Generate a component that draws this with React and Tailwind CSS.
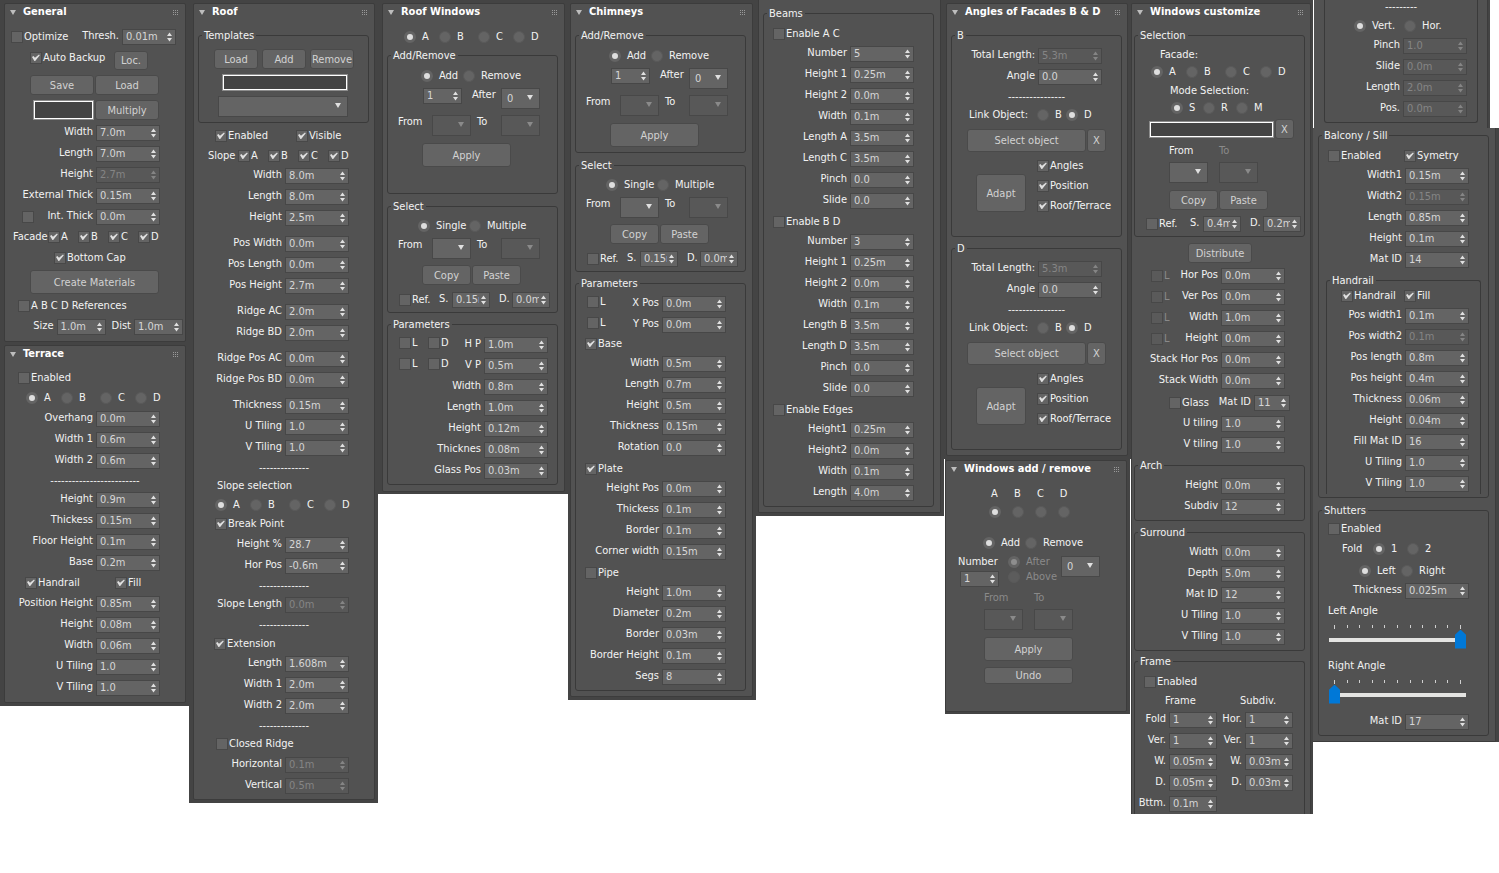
import React, { useId } from 'react'

const Header = ({ title }) => (
  <div className="flex h-4 items-center pl-[5px] pr-[7px]">
    <svg className="mr-[7px] h-[5px] w-[6px]" viewBox="0 0 6 5">
      <path d="M0 0H6L3 5Z" fill="#bdbdbd" />
    </svg>
    <h2 className="whitespace-nowrap text-[11px] font-bold leading-4 text-white">{title}</h2>
    <svg className="ml-auto h-[5px] w-[5px] shrink-0" viewBox="0 0 5 5" fill="#9a9a9a" shapeRendering="crispEdges">
      {[0, 2, 4].map((y) =>
        [0, 2, 4].map((x) => <rect key={x + '-' + y} x={x} y={y} width="1" height="1" />)
      )}
    </svg>
  </div>
)

const Panel = ({ title, className = '', children }) => (
  <section className={`rounded-[2px] border border-[#3c3c3c] bg-[#525252] ${className}`}>
    <Header title={title} />
    {children}
  </section>
)

const Group = ({ title, className = '', children }) => (
  <fieldset className={`min-w-0 rounded-[3px] border border-[#3a3a3a] ${className}`}>
    <legend className="ml-[3px] h-3 px-[2px] leading-[13px]">{title}</legend>
    {children}
  </fieldset>
)

const Check = ({ label, checked, disabled, className = '' }) => (
  <label className={`flex h-3 items-center whitespace-nowrap ${disabled ? 'text-[#8a8a8a]' : ''} ${className}`}>
    <span className="relative mr-px size-3 shrink-0">
      <input
        type="checkbox"
        defaultChecked={checked}
        disabled={disabled}
        aria-label={label || 'Internal thickness'}
        className="peer block size-3 appearance-none border border-[#484848] bg-[#646464] disabled:bg-[#5a5a5a]"
      />
      <svg
        className="pointer-events-none absolute inset-0 hidden size-3 peer-checked:block"
        viewBox="0 0 12 12"
        fill="#e0e0e0"
      >
        <path d="M2 5L3.4 4L5 5.8L9 2.4L9.8 3.2L5.2 9L4.4 9Z" />
      </svg>
    </span>
    {label}
  </label>
)

// options: [label, width class]
const Radios = ({ options, value, className = '', vertical, disabled, stacked }) => {
  const name = useId()
  return (
    <div className={`flex ${vertical ? 'flex-col gap-[3px]' : ''} ${className}`}>
      {options.map(([label, width = '']) => (
        <label
          key={label}
          className={`flex items-center whitespace-nowrap ${stacked ? 'flex-col-reverse gap-[6px] leading-3' : 'h-3 gap-[6px]'} ${disabled ? 'text-[#8a8a8a]' : ''} ${width}`}
        >
          <input
            type="radio"
            name={name}
            defaultChecked={label === value}
            disabled={disabled}
            className="size-3 shrink-0 appearance-none rounded-full border border-[#5a5a5a] bg-[#646464] checked:border-[3px] checked:border-[#646464] checked:bg-[#dedede] disabled:bg-[#5c5c5c] disabled:checked:bg-[#8e8e8e]"
          />
          <span>{label}</span>
        </label>
      ))}
    </div>
  )
}

const ABCD = [['A', 'w-[35px]'], ['B', 'w-[39px]'], ['C', 'w-[35px]'], ['D']]
const ADD_REMOVE = [['Add', 'w-[42px]'], ['Remove']]

const Spinner = ({ id, value, disabled, label, width = 'w-16' }) => (
  <span
    className={`flex h-4 shrink-0 items-center border border-[#474747] pl-[3px] pr-[3px] ${disabled ? 'bg-[#585858] text-[#858585]' : 'bg-[#646464] text-[#d6d6d6]'} ${width}`}
  >
    <input
      id={id}
      type="text"
      defaultValue={value}
      disabled={disabled}
      aria-label={label}
      className="h-[14px] w-0 min-w-0 grow bg-transparent leading-[14px] outline-none"
    />
    <svg className="ml-[2px] h-[10px] w-[5px] shrink-0" viewBox="0 0 5 10" fill={disabled ? '#858585' : '#e0e0e0'}>
      <path d="M0 4L2.5 0.5L5 4ZM0 6L2.5 9.5L5 6Z" />
    </svg>
  </span>
)

const Field = ({ label, value, disabled, width, labelWidth = 'pr-[3px]', className = '' }) => {
  const id = useId()
  return (
    <div className={`flex h-4 justify-end ${className}`}>
      <label htmlFor={id} className={`whitespace-nowrap leading-[14px] ${labelWidth}`}>
        {label}
      </label>
      <Spinner id={id} value={value} disabled={disabled} width={width} />
    </div>
  )
}

// rows: [label, value, disabled]
const Fields = ({ rows, className = '' }) => (
  <div className={`flex flex-col gap-[5px] ${className}`}>
    {rows.map(([label, value, disabled]) => (
      <Field key={label} label={label} value={value} disabled={disabled} />
    ))}
  </div>
)

const Button = ({ children, className = '' }) => (
  <button
    type="button"
    className={`shrink-0 rounded-[3px] border border-[#4a4a4a] bg-[#646464] text-center leading-none text-[#d2d2d2] hover:bg-[#6e6e6e] ${className}`}
  >
    {children}
  </button>
)

const Select = ({ label, value = '', disabled, width = 'w-[39px]' }) => (
  <span className={`relative h-[21px] shrink-0 ${width}`}>
    <select
      aria-label={label}
      disabled={disabled}
      className="block h-full w-full appearance-none border border-[#484848] bg-[#646464] pl-[5px] text-[#d6d6d6] disabled:bg-[#585858] disabled:opacity-100"
    >
      <option>{value}</option>
    </select>
    <svg className="pointer-events-none absolute right-[7px] top-[7px] h-[5px] w-[6px]" viewBox="0 0 6 5">
      <path d="M0 0H6L3 5Z" fill={disabled ? '#8a8a8a' : '#e0e0e0'} />
    </svg>
  </span>
)

const ColorBox = ({ label, className = '' }) => (
  <input
    type="text"
    aria-label={label}
    className={`block border border-[#8c8c8c] bg-[#444444] px-1 text-white shadow-[inset_0_0_0_1px_#ffffff] outline-none ${className}`}
  />
)

const Dashes = ({ children }) => (
  <div className="mt-[6px] h-3 overflow-hidden whitespace-nowrap text-center leading-3">{children}</div>
)

const FromTo = ({ enabled }) => (
  <div className="mt-[6px] flex h-[21px] pl-[10px] leading-[14px]">
    <span className="w-[34px]">From</span>
    <Select label="From" disabled={!enabled} />
    <span className="ml-[6px] w-6">To</span>
    <Select label="To" disabled />
  </div>
)

const AddRemove = ({ className }) => (
  <Group title="Add/Remove" className={className}>
    <Radios options={ADD_REMOVE} value="Add" className="mt-[9px] pl-[33px]" />
    <div className="mt-[6px] flex h-[21px] pl-[35px] leading-[14px]">
      <Spinner label="Count" value="1" width="w-[39px]" />
      <span className="ml-[10px] w-[29px]">After</span>
      <Select label="After" value="0" />
    </div>
    <FromTo />
    <Button className="ml-[34px] mt-[7px] block h-6 w-[89px]">Apply</Button>
  </Group>
)

const CopyPaste = ({ className = '' }) => (
  <div className={`flex gap-px pl-[34px] ${className}`}>
    <Button className="h-5 w-[49px]">Copy</Button>
    <Button className="h-5 w-[49px]">Paste</Button>
  </div>
)

const RefRow = ({ s, d, className = '', refWidth = 'w-[40px]' }) => (
  <div className={`flex items-center pl-[11px] ${className}`}>
    <Check label="Ref." className={refWidth} />
    <Field label="S." value={s} width="w-[38px]" labelWidth="w-[13px]" />
    <Field label="D." value={d} width="w-[38px]" labelWidth="w-[13px]" className="ml-[9px]" />
  </div>
)

const SelectGroup = ({ className }) => (
  <Group title="Select" className={`pb-1 ${className}`}>
    <Radios options={[['Single', 'w-[51px]'], ['Multiple']]} value="Single" className="mt-2 pl-[30px]" />
    <FromTo enabled />
    <CopyPaste className="mt-[6px]" />
    <RefRow s="0.15m" d="0.0m" className="mt-[7px]" />
  </Group>
)

const General = () => (
  <Panel title="General" className="pb-[6px]">
    <div className="mt-[9px] flex items-center justify-between pl-[6px] pr-[9px]">
      <Check label="Optimize" />
      <Field label="Thresh." value="0.01m" width="w-[54px]" />
    </div>
    <div className="mt-[6px] flex items-start pl-[25px] pr-[37px]">
      <Check label="Auto Backup" checked className="pt-px" />
      <Button className="ml-auto h-[19px] w-[34px]">Loc.</Button>
    </div>
    <div className="mt-[5px] flex gap-px pl-[25px]">
      <Button className="h-5 w-16">Save</Button>
      <Button className="h-5 w-16">Load</Button>
    </div>
    <div className="mt-[5px] flex gap-px pl-[28px]">
      <ColorBox label="Multiply value" className="h-5 w-[61px]" />
      <Button className="h-5 w-16">Multiply</Button>
    </div>
    <Fields
      className="mt-[5px] pr-[25px]"
      rows={[
        ['Width', '7.0m'],
        ['Length', '7.0m'],
        ['Height', '2.7m', true],
        ['External Thick', '0.15m'],
      ]}
    />
    <div className="mt-[5px] flex items-center justify-between pl-[17px] pr-[25px]">
      <Check />
      <Field label="Int. Thick" value="0.0m" />
    </div>
    <div className="mt-[6px] flex h-3 items-center pl-2">
      <span className="w-[35px]">Facade</span>
      {['A', 'B', 'C', 'D'].map((side) => (
        <Check key={side} label={side} checked className="w-[30px]" />
      ))}
    </div>
    <Check label="Bottom Cap" checked className="mt-[9px] pl-[49px]" />
    <Button className="ml-[25px] mt-[6px] block h-6 w-[129px]">Create Materials</Button>
    <Check label="A B C D References" className="mt-[6px] pl-[13px]" />
    <div className="mt-[7px] flex justify-end gap-[6px] pr-[2px]">
      <Field label="Size" value="1.0m" width="w-[49px]" />
      <Field label="Dist" value="1.0m" width="w-[49px]" />
    </div>
  </Panel>
)

const Terrace = () => (
  <Panel title="Terrace" className="mt-[3px] pb-[6px]">
    <Check label="Enabled" className="mt-[10px] pl-[13px]" />
    <Radios options={ABCD} value="A" className="mt-2 pl-[21px]" />
    <Fields
      className="mt-[7px] pr-[25px]"
      rows={[
        ['Overhang', '0.0m'],
        ['Width 1', '0.6m'],
        ['Width 2', '0.6m'],
      ]}
    />
    <Dashes>-------------------------</Dashes>
    <Fields
      className="mt-[5px] pr-[25px]"
      rows={[
        ['Height', '0.9m'],
        ['Thickess', '0.15m'],
        ['Floor Height', '0.1m'],
        ['Base', '0.2m'],
      ]}
    />
    <div className="mt-[6px] flex pl-5">
      <Check label="Handrail" checked className="w-[90px]" />
      <Check label="Fill" checked />
    </div>
    <Fields
      className="mt-[7px] pr-[25px]"
      rows={[
        ['Position Height', '0.85m'],
        ['Height', '0.08m'],
        ['Width', '0.06m'],
        ['U Tiling', '1.0'],
        ['V Tiling', '1.0'],
      ]}
    />
  </Panel>
)

const Roof = () => (
  <Panel title="Roof" className="pb-[5px]">
    <Group title="Templates" className="ml-1 mr-[5px] mt-[9px] pb-[5px]">
      <div className="mt-2 flex gap-1 pl-[15px]">
        <Button className="h-5 w-11">Load</Button>
        <Button className="h-5 w-11">Add</Button>
        <Button className="h-5 w-11">Remove</Button>
      </div>
      <ColorBox label="Template name" className="ml-[23px] mt-[5px] h-[17px] w-[126px]" />
      <div className="mt-[5px] flex pl-[19px]">
        <Select label="Template" width="w-[130px]" />
      </div>
    </Group>
    <div className="mt-[7px] flex pl-[21px]">
      <Check label="Enabled" checked className="w-[81px]" />
      <Check label="Visible" checked />
    </div>
    <div className="mt-2 flex h-3 items-center pl-[14px]">
      <span className="w-[30px]">Slope</span>
      {['A', 'B', 'C', 'D'].map((side) => (
        <Check key={side} label={side} checked className="w-[30px]" />
      ))}
    </div>
    <Fields
      className="mt-[6px] pr-[25px]"
      rows={[
        ['Width', '8.0m'],
        ['Length', '8.0m'],
        ['Height', '2.5m'],
      ]}
    />
    <Fields
      className="mt-[10px] pr-[25px]"
      rows={[
        ['Pos Width', '0.0m'],
        ['Pos Length', '0.0m'],
        ['Pos Height', '2.7m'],
      ]}
    />
    <Fields
      className="mt-[10px] pr-[25px]"
      rows={[
        ['Ridge AC', '2.0m'],
        ['Ridge BD', '2.0m'],
      ]}
    />
    <Fields
      className="mt-[10px] pr-[25px]"
      rows={[
        ['Ridge Pos AC', '0.0m'],
        ['Ridge Pos BD', '0.0m'],
      ]}
    />
    <Fields
      className="mt-[10px] pr-[25px]"
      rows={[
        ['Thickness', '0.15m'],
        ['U Tiling', '1.0'],
        ['V Tiling', '1.0'],
      ]}
    />
    <Dashes>--------------</Dashes>
    <p className="mt-[6px] h-3 pl-[23px] leading-3">Slope selection</p>
    <Radios options={ABCD} value="A" className="mt-[7px] pl-[21px]" />
    <Check label="Break Point" checked className="mt-[7px] pl-[21px]" />
    <Fields
      className="mt-[7px] pr-[25px]"
      rows={[
        ['Height %', '28.7'],
        ['Hor Pos', '-0.6m'],
      ]}
    />
    <Dashes>--------------</Dashes>
    <Fields className="mt-[5px] pr-[25px]" rows={[['Slope Length', '0.0m', true]]} />
    <Dashes>--------------</Dashes>
    <Check label="Extension" checked className="mt-[7px] pl-5" />
    <Fields
      className="mt-[6px] pr-[25px]"
      rows={[
        ['Length', '1.608m'],
        ['Width 1', '2.0m'],
        ['Width 2', '2.0m'],
      ]}
    />
    <Dashes>--------------</Dashes>
    <Check label="Closed Ridge" className="mt-[6px] pl-[22px]" />
    <Fields
      className="mt-[7px] pr-[25px]"
      rows={[
        ['Horizontal', '0.1m', true],
        ['Vertical', '0.5m', true],
      ]}
    />
  </Panel>
)

const RoofWindows = () => (
  <Panel title="Roof Windows" className="pb-[6px]">
    <Radios options={ABCD} value="A" className="mt-[11px] pl-[21px]" />
    <AddRemove className="ml-1 mr-[6px] mt-[6px] pb-[26px]" />
    <SelectGroup className="ml-1 mr-[6px] mt-[6px]" />
    <Group title="Parameters" className="ml-1 mr-[6px] mt-[5px] pb-[5px]">
      <div className="mt-[7px] flex flex-col gap-[5px] pl-[11px] pr-[9px]">
        {[
          ['H P', '1.0m'],
          ['V P', '0.5m'],
        ].map(([label, value]) => (
          <div key={label} className="flex">
            <Check label="L" className="w-[29px]" />
            <Check label="D" />
            <Field label={label} value={value} className="ml-auto" />
          </div>
        ))}
      </div>
      <Fields
        className="mt-[5px] pr-[9px]"
        rows={[
          ['Width', '0.8m'],
          ['Length', '1.0m'],
          ['Height', '0.12m'],
          ['Thicknes', '0.08m'],
          ['Glass Pos', '0.03m'],
        ]}
      />
    </Group>
  </Panel>
)

const Chimneys = () => (
  <Panel title="Chimneys" className="pb-[5px]">
    <AddRemove className="ml-1 mr-[6px] mt-[9px] pb-[5px]" />
    <SelectGroup className="ml-1 mr-[6px] mt-[6px]" />
    <Group title="Parameters" className="ml-1 mr-[6px] mt-[5px] pb-[5px]">
      <div className="mt-[7px] flex flex-col gap-[5px] pl-[11px] pr-[19px]">
        {['X Pos', 'Y Pos'].map((label) => (
          <div key={label} className="flex justify-between">
            <Check label="L" />
            <Field label={label} value="0.0m" />
          </div>
        ))}
      </div>
      <Check label="Base" checked className="mt-[5px] pl-[9px]" />
      <Fields
        className="mt-[6px] pr-[19px]"
        rows={[
          ['Width', '0.5m'],
          ['Length', '0.7m'],
          ['Height', '0.5m'],
          ['Thickness', '0.15m'],
          ['Rotation', '0.0'],
        ]}
      />
      <Check label="Plate" checked className="mt-[7px] pl-[9px]" />
      <Fields
        className="mt-[6px] pr-[19px]"
        rows={[
          ['Height Pos', '0.0m'],
          ['Thickess', '0.1m'],
          ['Border', '0.1m'],
          ['Corner width', '0.15m'],
        ]}
      />
      <Check label="Pipe" className="mt-[7px] pl-[9px]" />
      <Fields
        className="mt-[6px] pr-[19px]"
        rows={[
          ['Height', '1.0m'],
          ['Diameter', '0.2m'],
          ['Border', '0.03m'],
          ['Border Height', '0.1m'],
          ['Segs', '8'],
        ]}
      />
    </Group>
  </Panel>
)

const Beams = () => (
  <section className="rounded-b-[2px] border border-t-0 border-[#3c3c3c] bg-[#525252] pb-[5px] pt-[7px]">
    <Group title="Beams" className="ml-1 mr-[6px] pb-[5px]">
      <Check label="Enable A C" className="mt-[9px] pl-[9px]" />
      <Fields
        className="mt-[6px] pr-[19px]"
        rows={[
          ['Number', '5'],
          ['Height 1', '0.25m'],
          ['Height 2', '0.0m'],
          ['Width', '0.1m'],
          ['Length A', '3.5m'],
          ['Length C', '3.5m'],
          ['Pinch', '0.0'],
          ['Slide', '0.0'],
        ]}
      />
      <Check label="Enable B D" className="mt-[7px] pl-[9px]" />
      <Fields
        className="mt-[6px] pr-[19px]"
        rows={[
          ['Number', '3'],
          ['Height 1', '0.25m'],
          ['Height 2', '0.0m'],
          ['Width', '0.1m'],
          ['Length B', '3.5m'],
          ['Length D', '3.5m'],
          ['Pinch', '0.0'],
          ['Slide', '0.0'],
        ]}
      />
      <Check label="Enable Edges" className="mt-[7px] pl-[9px]" />
      <Fields
        className="mt-[6px] pr-[19px]"
        rows={[
          ['Height1', '0.25m'],
          ['Height2', '0.0m'],
          ['Width', '0.1m'],
          ['Length', '4.0m'],
        ]}
      />
    </Group>
  </section>
)

const FacadeAngle = ({ title, className }) => (
  <Group title={title} className={`ml-1 mr-[5px] pb-6 ${className}`}>
    <Fields
      className="mt-[7px] pr-[19px]"
      rows={[
        ['Total Length:', '5.3m', true],
        ['Angle', '0.0'],
      ]}
    />
    <Dashes>----------------</Dashes>
    <div className="mt-[6px] flex h-3 items-center pl-[17px]">
      <span className="w-[68px] whitespace-nowrap">Link Object:</span>
      <Radios options={[['B', 'w-[29px]'], ['D']]} value="D" />
    </div>
    <div className="mt-2 flex gap-px pl-[15px]">
      <Button className="h-[23px] w-[119px]">Select object</Button>
      <Button className="h-[23px] w-[19px]">X</Button>
    </div>
    <div className="mt-2 flex items-start pl-[24px]">
      <Button className="mt-[14px] h-[38px] w-[50px]">Adapt</Button>
      <div className="ml-[11px] flex flex-col gap-2">
        <Check label="Angles" checked />
        <Check label="Position" checked />
        <Check label="Roof/Terrace" checked />
      </div>
    </div>
  </Group>
)

const WindowsAddRemove = () => (
  <Panel title="Windows add / remove" className="pb-[27px]">
    <Radios
      stacked
      options={['A', 'B', 'C', 'D'].map((side) => [side, 'w-[23px]'])}
      value="A"
      className="mt-[11px] pl-[37px]"
    />
    <Radios options={ADD_REMOVE} value="Add" className="mt-[19px] pl-[37px]" />
    <div className="mt-[7px] flex items-start pl-3">
      <div className="w-[50px]">
        <div className="h-3 leading-3">Number</div>
        <div className="mt-[3px] flex pl-[2px]">
          <Spinner label="Number" value="1" width="w-[39px]" />
        </div>
      </div>
      <Radios vertical disabled options={[['After'], ['Above']]} value="After" className="w-[53px]" />
      <Select label="Position" value="0" />
    </div>
    <div className="mt-[5px] flex h-3 pl-[38px] leading-3 text-[#8a8a8a]">
      <span className="w-[50px]">From</span>
      <span>To</span>
    </div>
    <div className="mt-[5px] flex gap-[11px] pl-[38px]">
      <Select label="From" disabled />
      <Select label="To" disabled />
    </div>
    <div className="mt-[7px] flex flex-col gap-[6px] pl-[38px]">
      <Button className="h-6 w-[89px]">Apply</Button>
      <Button className="h-[17px] w-[89px]">Undo</Button>
    </div>
  </Panel>
)

const WindowsCustomize = () => (
  <Panel title="Windows customize" className="rounded-b-none border-b-0">
    <Group title="Selection" className="ml-[2px] mr-[5px] mt-[9px] pb-1">
      <p className="mt-2 h-3 pl-[25px] leading-3">Facade:</p>
      <Radios options={ABCD} value="A" className="mt-[5px] pl-4" />
      <p className="mt-[7px] h-3 pl-[35px] leading-3">Mode Selection:</p>
      <Radios
        options={[['S', 'w-8'], ['R', 'w-[33px]'], ['M']]}
        value="S"
        className="mt-[5px] pl-9"
      />
      <div className="mt-[5px] flex items-center gap-px pl-[14px]">
        <ColorBox label="Selected windows" className="h-[17px] w-[125px]" />
        <Button className="h-5 w-[19px]">X</Button>
      </div>
      <div className="mt-[6px] flex h-3 pl-[34px] leading-3">
        <span className="w-[50px]">From</span>
        <span className="text-[#8a8a8a]">To</span>
      </div>
      <div className="mt-[5px] flex gap-[11px] pl-[34px]">
        <Select label="From" />
        <Select label="To" disabled />
      </div>
      <CopyPaste className="mt-[7px]" />
      <RefRow s="0.4m" d="0.2m" refWidth="w-[44px]" className="mt-[6px]" />
    </Group>
    <Button className="ml-[56px] mt-[6px] block h-5 w-16">Distribute</Button>
    <div className="mt-[5px] flex flex-col gap-[5px] pl-[19px] pr-[25px]">
      {[
        ['Hor Pos', '0.0m'],
        ['Ver Pos', '0.0m'],
        ['Width', '1.0m'],
        ['Height', '0.0m'],
      ].map(([label, value]) => (
        <div key={label} className="flex items-center justify-between">
          <Check label="L" disabled />
          <Field label={label} value={value} />
        </div>
      ))}
    </div>
    <Fields
      className="mt-[5px] pr-[25px]"
      rows={[
        ['Stack Hor Pos', '0.0m'],
        ['Stack Width', '0.0m'],
      ]}
    />
    <div className="mt-[6px] flex items-center justify-end gap-[10px] pr-5">
      <Check label="Glass" />
      <Field label="Mat ID" value="11" width="w-[36px]" />
    </div>
    <Fields
      className="mt-[5px] pr-[25px]"
      rows={[
        ['U tiling', '1.0'],
        ['V tiling', '1.0'],
      ]}
    />
    <Group title="Arch" className="ml-[2px] mr-[5px] mt-[6px] pb-[5px]">
      <Fields
        className="mt-[7px] pr-[19px]"
        rows={[
          ['Height', '0.0m'],
          ['Subdiv', '12'],
        ]}
      />
    </Group>
    <Group title="Surround" className="ml-[2px] mr-[5px] mt-[5px] pb-[5px]">
      <Fields
        className="mt-[7px] pr-[19px]"
        rows={[
          ['Width', '0.0m'],
          ['Depth', '5.0m'],
          ['Mat ID', '12'],
          ['U Tiling', '1.0'],
          ['V Tiling', '1.0'],
        ]}
      />
    </Group>
    <Group title="Frame" className="ml-[2px] mr-[5px] mt-1 rounded-b-none border-b-0 pb-[2px]">
      <Check label="Enabled" className="mt-[9px] pl-[9px]" />
      <div className="mt-[7px] flex h-3 pl-[30px] leading-3">
        <span className="w-[75px]">Frame</span>
        <span>Subdiv.</span>
      </div>
      <div className="mt-[5px] flex flex-col gap-[5px]">
        {[
          ['Fold', '1', 'Hor.', '1'],
          ['Ver.', '1', 'Ver.', '1'],
          ['W.', '0.05m', 'W.', '0.03m'],
          ['D.', '0.05m', 'D.', '0.03m'],
          ['Bttm.', '0.1m'],
        ].map(([label, value, subLabel, subValue]) => (
          <div key={label} className="flex">
            <Field label={label} value={value} width="w-12" className="w-[82px]" />
            {subLabel && <Field label={subLabel} value={subValue} width="w-12" className="w-[76px]" />}
          </div>
        ))}
      </div>
    </Group>
  </Panel>
)

const ArchLimits = () => (
  <div className="mr-[9px] border-l border-white bg-[#444444] pr-[2px]">
    <section className="border-r border-[#3c3c3c] bg-[#525252] pb-[5px]">
      <div className="ml-[10px] mr-[9px] rounded-b-[3px] border border-t-0 border-[#3a3a3a] pb-[5px] pt-px">
        <div className="h-3 text-center leading-3">---------</div>
        <Radios options={[['Vert.', 'w-[50px]'], ['Hor.']]} value="Vert." className="mt-[7px] pl-[29px]" />
        <Fields
          className="mt-[6px] pr-[10px]"
          rows={[
            ['Pinch', '1.0', true],
            ['Slide', '0.0m', true],
            ['Length', '2.0m', true],
            ['Pos.', '0.0m', true],
          ]}
        />
      </div>
    </section>
  </div>
)

const Angle = ({ label, value, className }) => {
  const id = useId()
  return (
    <div className={`pl-[9px] ${className}`}>
      <label htmlFor={id} className="block h-3 leading-3">
        {label}
      </label>
      <svg className="mt-2 h-1 w-[138px]" viewBox="0 0 138 4" fill="#d0d0d0" shapeRendering="crispEdges">
        {[6, 19, 31, 44, 56, 69, 82, 94, 107, 119, 132].map((x) => (
          <rect key={x} x={x} y="0" width="1" height={x === 6 || x === 132 ? 4 : 3} />
        ))}
      </svg>
      <input
        id={id}
        type="range"
        min="0"
        max="100"
        defaultValue={value}
        className="ml-px mt-px block h-[19px] w-[137px] appearance-none bg-transparent [&::-webkit-slider-runnable-track]:h-1 [&::-webkit-slider-runnable-track]:bg-[#e4e4e2] [&::-webkit-slider-thumb]:-mt-2 [&::-webkit-slider-thumb]:h-[19px] [&::-webkit-slider-thumb]:w-[11px] [&::-webkit-slider-thumb]:appearance-none [&::-webkit-slider-thumb]:bg-[#0078d7] [&::-webkit-slider-thumb]:[clip-path:polygon(50%_0,100%_28%,100%_100%,0_100%,0_28%)]"
      />
    </div>
  )
}

const BalconyAndShutters = () => (
  <section className="rounded-br-[2px] border-b border-r border-[#3c3c3c] bg-[#525252] pb-[5px] pt-px">
    <Group title="Balcony / Sill" className="ml-[5px] mr-[6px] pb-[3px]">
      <div className="mt-[9px] flex pl-[9px]">
        <Check label="Enabled" className="w-[76px]" />
        <Check label="Symetry" checked />
      </div>
      <Fields
        className="mt-[6px] pr-[19px]"
        rows={[
          ['Width1', '0.15m'],
          ['Width2', '0.15m', true],
          ['Length', '0.85m'],
          ['Height', '0.1m'],
          ['Mat ID', '14'],
        ]}
      />
      <Group title="Handrail" className="mx-[7px] mt-[6px] rounded-b-none border-b-0 pb-[2px]">
        <div className="mt-1 flex pl-[14px]">
          <Check label="Handrail" checked className="w-[63px]" />
          <Check label="Fill" checked />
        </div>
        <Fields
          className="mt-[6px] pr-[11px]"
          rows={[
            ['Pos width1', '0.1m'],
            ['Pos width2', '0.1m', true],
            ['Pos length', '0.8m'],
            ['Pos height', '0.4m'],
            ['Thickness', '0.06m'],
            ['Height', '0.04m'],
            ['Fill Mat ID', '16'],
            ['U Tiling', '1.0'],
            ['V Tiling', '1.0'],
          ]}
        />
      </Group>
    </Group>
    <Group title="Shutters" className="ml-[5px] mr-[6px] mt-[6px] pb-[5px]">
      <Check label="Enabled" className="mt-[7px] pl-[9px]" />
      <div className="mt-2 flex h-3 items-center pl-[23px]">
        <span className="w-[31px]">Fold</span>
        <Radios options={[['1', 'w-[34px]'], ['2']]} value="1" />
      </div>
      <Radios options={[['Left', 'w-[42px]'], ['Right']]} value="Left" className="mt-[10px] pl-10" />
      <Fields className="mt-[6px] pr-[19px]" rows={[['Thickness', '0.025m']]} />
      <Angle label="Left Angle" value={100} className="mt-[6px]" />
      <Angle label="Right Angle" value={0} className="mt-[11px]" />
      <Fields className="mt-[10px] pr-[19px]" rows={[['Mat ID', '17']]} />
    </Group>
  </section>
)

const App = () => (
  <main className="grid grid-cols-[189fr_189fr_190fr_188fr_188fr_187fr_182fr_186fr] items-start bg-white font-['DejaVu_Sans_Condensed','DejaVu_Sans',sans-serif] text-[11px] leading-3 text-[#f2f2f2]">
    <div className="bg-[#444444] pb-[3px] pl-1 pr-[3px] pt-[3px]">
      <General />
      <Terrace />
    </div>
    <div className="bg-[#444444] pb-[3px] pl-1 pr-[3px] pt-[3px]">
      <Roof />
    </div>
    <div className="bg-[#444444] pb-[2px] pl-1 pr-[3px] pt-[3px]">
      <RoofWindows />
    </div>
    <div className="bg-[#444444] pb-[3px] pl-[2px] pr-[3px] pt-[3px]">
      <Chimneys />
    </div>
    <div className="bg-[#444444] pb-[3px] pl-[2px] pr-[3px]">
      <Beams />
    </div>
    <div>
      <div className="bg-[#444444] pb-[3px] pl-[2px] pr-[3px] pt-[3px]">
        <Panel title="Angles of Facades B & D" className="pb-[5px]">
          <FacadeAngle title="B" className="mt-[9px]" />
          <FacadeAngle title="D" className="mt-[5px]" />
        </Panel>
      </div>
      <div className="mx-px bg-[#444444] pb-[2px] pr-[3px] pt-px">
        <WindowsAddRemove />
      </div>
    </div>
    <div className="bg-[#444444] pr-[2px] pt-[3px]">
      <WindowsCustomize />
    </div>
    <div>
      <ArchLimits />
      <div className="bg-[#444444] pr-[3px]">
        <BalconyAndShutters />
      </div>
    </div>
  </main>
)

export default App
